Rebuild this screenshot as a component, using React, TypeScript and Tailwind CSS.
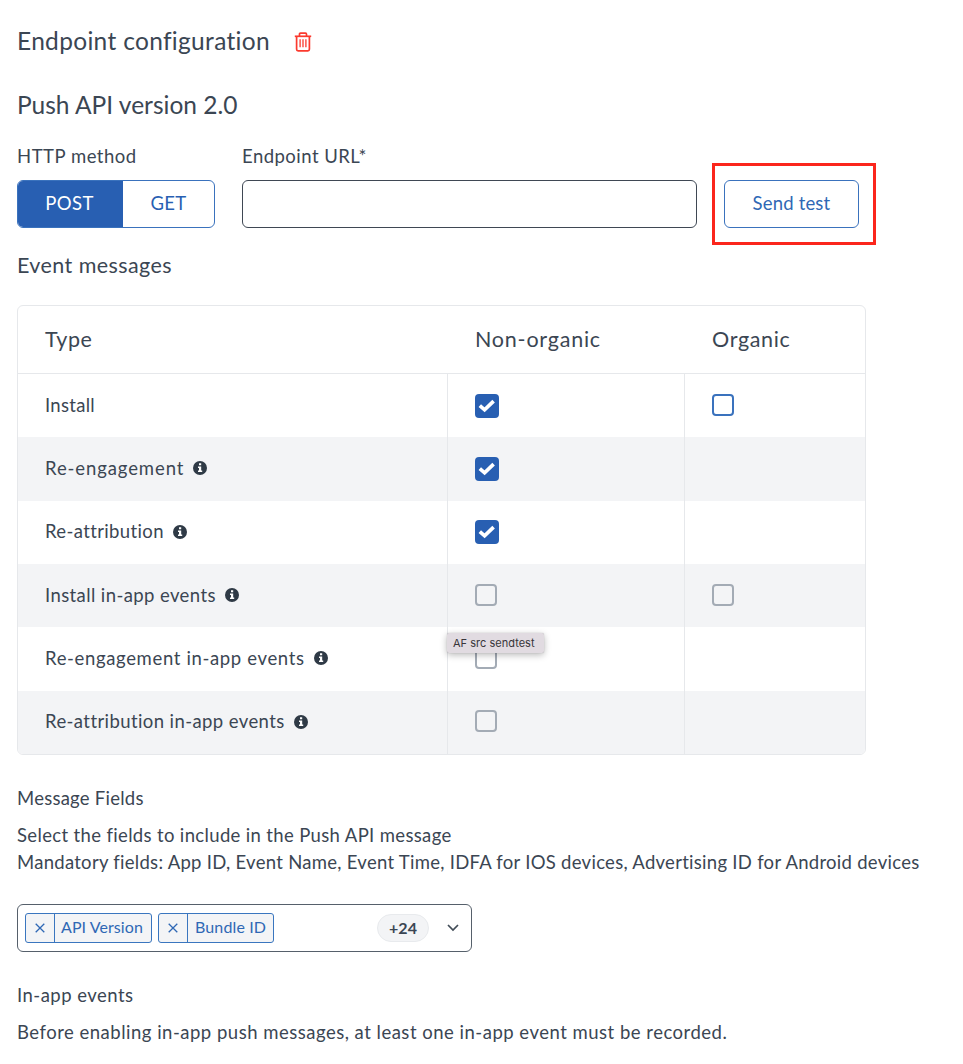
import type { ReactNode } from 'react';

type Box = 'checked' | 'active' | 'disabled' | null;

type Row = {
  label: string;
  tracking: string;
  info: boolean;
  nonOrganic: Box;
  organic: Box;
  tooltip?: string;
};

const rows: Row[] = [
  { label: 'Install', tracking: 'tracking-[0.3px]', info: false, nonOrganic: 'checked', organic: 'active' },
  { label: 'Re-engagement', tracking: 'tracking-[0.9px]', info: true, nonOrganic: 'checked', organic: null },
  { label: 'Re-attribution', tracking: 'tracking-[0.37px]', info: true, nonOrganic: 'checked', organic: null },
  { label: 'Install in-app events', tracking: 'tracking-[0.4px]', info: true, nonOrganic: 'disabled', organic: 'disabled' },
  { label: 'Re-engagement in-app events', tracking: 'tracking-[0.65px]', info: true, nonOrganic: 'disabled', organic: null, tooltip: 'AF src sendtest' },
  { label: 'Re-attribution in-app events', tracking: 'tracking-[0.41px]', info: true, nonOrganic: 'disabled', organic: null },
];

function TrashIcon() {
  return (
    <svg width="18" height="20" viewBox="0 0 18 20" fill="none" stroke="#fb3a2e" strokeWidth="1.7">
      <path d="M0.8 4.3H17.2" />
      <path d="M5.5 4V2.2Q5.5 1.2 6.5 1.2H11.5Q12.5 1.2 12.5 2.2V4" />
      <path d="M2.6 4.5V17.3Q2.6 18.8 4.1 18.8H13.9Q15.4 18.8 15.4 17.3V4.5" />
      <path d="M6.1 7.3V15.3M9 7.3V15.3M11.9 7.3V15.3" strokeWidth="1.3" />
    </svg>
  );
}

function InfoIcon() {
  return (
    <svg width="14" height="14" viewBox="0 0 14 14" className="mb-px">
      <circle cx="7" cy="7" r="7" fill="#2f3a46" />
      <path d="M6 2.3H8.2V4.3H6ZM5 5.5H8.2V9.6H9.2V11.1H5V9.6H6V7H5Z" fill="#fff" />
    </svg>
  );
}

function Checkbox({ kind }: { kind: Box }) {
  if (kind === 'checked') {
    return (
      <span className="flex h-6 w-6 items-center justify-center rounded-[4px] bg-[#285fb2]">
        <svg width="24" height="24" viewBox="0 0 24 24" fill="none" stroke="#fff" strokeWidth="3.7">
          <path d="M4.8 11.6L9.6 15.8L18.6 7.2" strokeLinejoin="miter" />
        </svg>
      </span>
    );
  }
  if (kind === 'active') return <span className="mb-[2px] h-[22px] w-[22px] rounded-[4px] border-2 border-[#3a72bd] bg-white" />;
  if (kind === 'disabled') return <span className="mb-[2px] h-[22px] w-[22px] rounded-[4px] border-2 border-[#a3abb5]" />;
  return null;
}

function Cell({ children }: { children?: ReactNode }) {
  return <div className="relative flex items-center border-l-[1.5px] border-[#e6e8eb] pl-[27px]">{children}</div>;
}

function Tag({ label, className }: { label: string; className: string }) {
  return (
    <div className="flex h-[30px] items-stretch rounded-[3px] border-[1.5px] border-[#3a76bf] bg-[#f3f4f6] text-[16px] text-[#2f68b5]">
      <span className="flex w-[29px] items-center justify-center border-r border-[#3a76bf]">
        <svg width="10" height="10" viewBox="0 0 10 10" stroke="#2f68b5" strokeWidth="1.3">
          <path d="M0.7 0.7L9.3 9.3M9.3 0.7L0.7 9.3" />
        </svg>
      </span>
      <span className={`flex items-center pb-[2px] whitespace-nowrap ${className}`}>{label}</span>
    </div>
  );
}

export default function App() {
  return (
    <main className="h-[1064px] w-[963px] overflow-hidden bg-white pt-[20px] pl-[17px] font-['Lato','Liberation_Sans',sans-serif] text-[18.5px] text-[#3b4653]">
      <header className="flex h-[42px] items-center">
        <h1 className="w-[277px] text-[24.5px] tracking-[0.32px] whitespace-nowrap">Endpoint configuration</h1>
        <button aria-label="Delete endpoint" className="mt-px"><TrashIcon /></button>
      </header>

      <h2 className="mt-[23px] h-[40px] text-[24.5px] leading-[40px]">Push API version 2.0</h2>

      <div className="mt-[15px] flex">
        <div className="w-[198px]">
          <div className="h-[30px] pt-px leading-[30px] tracking-[0.52px]">HTTP method</div>
          <div className="mt-[10px] flex h-[48px] overflow-hidden rounded-[6px] border-[1.5px] border-[#3a72bd]">
            <button className="w-[105px] bg-[#285fb2] pr-[2px] pb-[1px] tracking-[0.45px] text-white">POST</button>
            <button className="flex-1 pb-[1px] tracking-[0.3px] text-[#285fb2]">GET</button>
          </div>
        </div>
        <div className="ml-[27px] w-[455px]">
          <div className="h-[30px] pt-px leading-[30px] tracking-[0.47px]">Endpoint URL*</div>
          <input aria-label="Endpoint URL" className="mt-[10px] block h-[48px] w-full rounded-[6px] border-[1.5px] border-[#3f4854] outline-none" />
        </div>
        <div className="mt-[23px] ml-[15px] h-[82px] w-[164px] border-[3px] border-[#fb261c] pt-[14px] pl-[9px]">
          <button className="h-[48px] w-[135px] rounded-[6px] border-[1.5px] border-[#3a72bd] pb-[1px] tracking-[0.18px] text-[#2f68b5]">Send test</button>
        </div>
      </div>

      <h3 className="mt-[5px] h-[30px] text-[21.5px] leading-[30px] tracking-[0.42px]">Event messages</h3>

      <section className="mt-[25px] h-[450px] w-[849px] overflow-hidden rounded-[6px] border-[1.5px] border-[#e6e8eb]">
        <div className="grid h-[68px] grid-cols-[429px_237px_1fr] items-center border-b-[1.5px] border-[#e6e8eb] text-[21.5px]">
          <div className="pl-[27px] tracking-[0.5px]">Type</div>
          <div className="pl-[28px] tracking-[0.78px]">Non-organic</div>
          <div className="pl-[28px] tracking-[0.66px]">Organic</div>
        </div>
        {rows.map((row, i) => (
          <div key={row.label} className={`grid h-[63.33px] grid-cols-[429px_237px_1fr] ${i % 2 ? 'bg-[#f3f4f6]' : 'bg-white'}`}>
            <div className="flex items-center gap-[9px] pl-[27px]">
              <span className={`whitespace-nowrap ${row.tracking}`}>{row.label}</span>
              {row.info && <InfoIcon />}
            </div>
            <Cell>
              <Checkbox kind={row.nonOrganic} />
              {row.tooltip && (
                <div className="absolute top-[6px] left-[-1px] flex h-[20px] w-[97px] items-center rounded-[2px] bg-[#e1dbe1] pl-[6px] font-['Inter',sans-serif] text-[11px] tracking-[0.02px] whitespace-nowrap text-[#38363a] shadow-[0_2px_7px_rgba(0,0,0,0.28),0_0_1px_rgba(0,0,0,0.3)]">
                  {row.tooltip}
                </div>
              )}
            </Cell>
            <Cell>
              <Checkbox kind={row.organic} />
            </Cell>
          </div>
        ))}
      </section>

      <h4 className="mt-[28px] h-[30px] leading-[30px] tracking-[0.25px]">Message Fields</h4>
      <div className="mt-[9px] leading-[27px] whitespace-nowrap">
        <p className="tracking-[0.35px]">Select the fields to include in the Push API message</p>
        <p className="tracking-[0.28px]">Mandatory fields: App ID, Event Name, Event Time, IDFA for IOS devices, Advertising ID for Android devices</p>
      </div>

      <div className="mt-[28px] flex h-[48px] w-[455px] items-center rounded-[6px] border-[1.5px] border-[#56606b] pl-[7px]">
        <div className="flex w-[352px] gap-[6px]">
          <Tag label="API Version" className="w-[96px] pl-[6px] tracking-[0.08px]" />
          <Tag label="Bundle ID" className="w-[85px] pl-[7px] tracking-[0.13px]" />
        </div>
        <span className="flex h-[28px] w-[52px] items-center justify-center rounded-full border border-[#e8eaed] bg-[#f3f4f6] pb-px text-[16px] font-bold">+24</span>
        <svg className="ml-[18px]" width="12" height="8" viewBox="0 0 12 8" fill="none" stroke="#424c57" strokeWidth="1.7">
          <path d="M1 1L6 6L11 1" />
        </svg>
      </div>

      <h4 className="mt-[28px] h-[30px] leading-[30px] tracking-[0.48px]">In-app events</h4>
      <p className="mt-[9px] leading-[27px] tracking-[0.5px] whitespace-nowrap">Before enabling in-app push messages, at least one in-app event must be recorded.</p>
    </main>
  );
}
